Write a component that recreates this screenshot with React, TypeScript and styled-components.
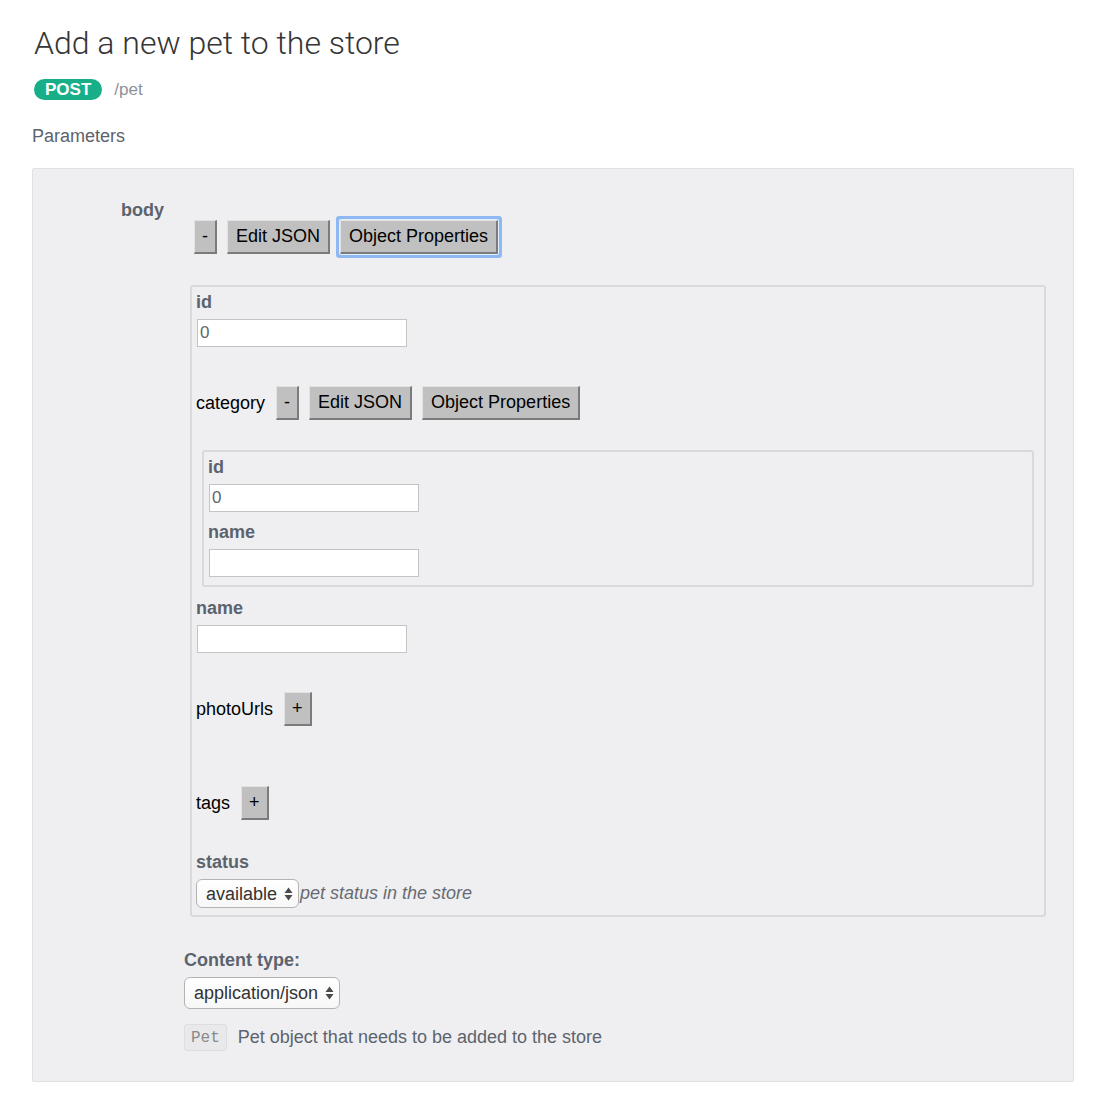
import React from "react";
import styled, { createGlobalStyle, css } from "styled-components";

const GlobalStyle = createGlobalStyle`
  body {
    margin: 0;
    background: #ffffff;
    font-family: "Liberation Sans", Arial, sans-serif;
  }
`;

const Colors = {
  label: "#5c636d",
  muted: "#8d9197",
  panel: "#efeff1",
  panelBorder: "#e1e1e3",
  boxBorder: "#d9d9db",
  post: "#17ae88",
};

const Page = styled.div`
  padding: 24px 32px 36px;
`;

const Title = styled.h2`
  margin: 0 0 0 2px;
  font-family: Roboto, "Liberation Sans", sans-serif;
  font-weight: 300;
  font-size: 32px;
  line-height: 38px;
  color: #363636;
`;

const MethodRow = styled.div`
  display: flex;
  align-items: center;
  gap: 12px;
  margin: 17px 0 0 2px;
`;

const MethodBadge = styled.span`
  display: inline-flex;
  align-items: center;
  height: 21px;
  padding: 0 11px;
  border-radius: 11px;
  background: ${Colors.post};
  color: #fff;
  font-weight: bold;
  font-size: 17px;
`;

const Path = styled.span`
  font-size: 17px;
  color: ${Colors.muted};
`;

const SectionTitle = styled.div`
  margin-top: 25px;
  font-size: 18px;
  line-height: 22px;
  color: ${Colors.label};
`;

const Panel = styled.div`
  margin-top: 21px;
  background: ${Colors.panel};
  border: 1px solid ${Colors.panelBorder};
  border-radius: 2px;
  padding: 30px 27px 30px 88px;
  display: grid;
  grid-template-columns: 63px 1fr;
`;

const ParamName = styled.div`
  font-size: 18px;
  line-height: 22px;
  font-weight: bold;
  color: ${Colors.label};
`;

const ParamBody = styled.div`
  display: flex;
  flex-direction: column;
  align-items: flex-start;
`;

const ButtonRow = styled.div`
  display: flex;
  align-items: center;
  gap: 10px;
  margin-top: 21px;
  padding-left: 10px;
`;

const Button = styled.button<{ $focused?: boolean }>`
  height: 34px;
  padding: 0 8px;
  background: #c0c0c0;
  color: #000;
  font-family: "Liberation Sans", Arial, sans-serif;
  font-size: 18px;
  border-style: solid;
  border-color: #e2e2e2 #7b7b7b #7b7b7b #e2e2e2;
  border-width: 1px 2px 2px 1px;
  border-radius: 0;
  cursor: pointer;
  ${(p) =>
    p.$focused &&
    css`
      box-shadow: 0 0 0 1px #e4eefc, 0 0 0 4px #8db8f2;
      border-radius: 1px;
    `}
`;

const SmallButton = styled(Button)`
  padding: 0 7px;
`;

const ObjectBox = styled.div<{ $top?: number; $nested?: boolean }>`
  align-self: stretch;
  margin-top: ${(p) => p.$top ?? 0}px;
  margin-left: 6px;
  margin-right: ${(p) => (p.$nested ? 6 : 0)}px;
  border: 2px solid ${Colors.boxBorder};
  border-radius: 3px;
  padding: ${(p) => (p.$nested ? "4px 4px 8px" : "4px 4px 7px")};
  display: flex;
  flex-direction: column;
  align-items: flex-start;
`;

const Field = styled.div<{ $top?: number }>`
  display: flex;
  flex-direction: column;
  align-items: flex-start;
  margin-top: ${(p) => p.$top ?? 0}px;
`;

const FieldLabel = styled.label`
  display: block;
  font-size: 18px;
  line-height: 22px;
  font-weight: bold;
  color: ${Colors.label};
  margin-bottom: 6px;
`;

const TextInput = styled.input`
  box-sizing: border-box;
  width: 210px;
  height: 28px;
  margin: 0 0 0 1px;
  padding: 0 2px;
  border: 1px solid #c4c4c4;
  background: #fff;
  font-family: "Liberation Sans", Arial, sans-serif;
  font-size: 17px;
  color: #666;
  outline: none;
`;

const InlineRow = styled.div<{ $top?: number }>`
  display: flex;
  align-items: center;
  gap: 10px;
  margin-top: ${(p) => p.$top ?? 0}px;
`;

const PlainLabel = styled.span`
  font-size: 18px;
  color: #000;
  margin-right: 1px;
`;

const SelectWrap = styled.span`
  position: relative;
  display: inline-flex;
`;

const Select = styled.select<{ $height: number }>`
  appearance: none;
  -webkit-appearance: none;
  height: ${(p) => p.$height}px;
  padding: 0 20px 0 9px;
  border: 1px solid #b3b3b3;
  border-radius: 6px;
  background: linear-gradient(#ffffff, #f7f7f7);
  font-family: "Liberation Sans", Arial, sans-serif;
  font-size: 18px;
  color: #333;
  outline: none;
`;

const Arrows = styled.svg`
  position: absolute;
  right: 6px;
  top: 50%;
  margin-top: -7px;
  pointer-events: none;
`;

const Hint = styled.span`
  font-size: 18px;
  font-style: italic;
  color: #666c74;
  margin-left: 1px;
`;

const StatusRow = styled.div`
  display: flex;
  align-items: center;
`;

const ContentLabel = styled(FieldLabel)`
  margin-top: 32px;
`;

const DescRow = styled.div`
  display: flex;
  align-items: center;
  gap: 11px;
  margin-top: 15px;
`;

const Code = styled.code`
  display: inline-flex;
  align-items: center;
  height: 27px;
  box-sizing: border-box;
  padding: 0 6px;
  border: 1px solid #dedee0;
  border-radius: 3px;
  background: #e9e9eb;
  font-family: "Liberation Mono", monospace;
  font-size: 16px;
  color: #8a8a8a;
`;

const Description = styled.span`
  font-size: 18px;
  color: ${Colors.label};
`;

const SelectBox = ({
  value,
  options,
  height,
}: {
  value: string;
  options: string[];
  height: number;
}) => (
  <SelectWrap>
    <Select $height={height} defaultValue={value}>
      {options.map((o) => (
        <option key={o}>{o}</option>
      ))}
    </Select>
    <Arrows width="9" height="14" viewBox="0 0 9 14">
      <path d="M4.5 0.5 L8.5 6 L0.5 6 Z" fill="#4a4a4a" />
      <path d="M4.5 13.5 L8.5 8 L0.5 8 Z" fill="#4a4a4a" />
    </Arrows>
  </SelectWrap>
);

const App = () => {
  return (
    <>
      <GlobalStyle />
      <Page>
        <Title>Add a new pet to the store</Title>
        <MethodRow>
          <MethodBadge>POST</MethodBadge>
          <Path>/pet</Path>
        </MethodRow>
        <SectionTitle>Parameters</SectionTitle>

        <Panel>
          <ParamName>body</ParamName>
          <ParamBody>
            <ButtonRow>
              <SmallButton>-</SmallButton>
              <Button>Edit JSON</Button>
              <Button $focused>Object Properties</Button>
            </ButtonRow>

            <ObjectBox $top={31}>
              <Field>
                <FieldLabel>id</FieldLabel>
                <TextInput defaultValue="0" />
              </Field>

              <InlineRow $top={39}>
                <PlainLabel>category</PlainLabel>
                <SmallButton>-</SmallButton>
                <Button>Edit JSON</Button>
                <Button>Object Properties</Button>
              </InlineRow>

              <ObjectBox $top={30} $nested>
                <Field>
                  <FieldLabel>id</FieldLabel>
                  <TextInput defaultValue="0" />
                </Field>
                <Field $top={9}>
                  <FieldLabel>name</FieldLabel>
                  <TextInput />
                </Field>
              </ObjectBox>

              <Field $top={10}>
                <FieldLabel>name</FieldLabel>
                <TextInput />
              </Field>

              <InlineRow $top={39}>
                <PlainLabel>photoUrls</PlainLabel>
                <SmallButton>+</SmallButton>
              </InlineRow>

              <InlineRow $top={60}>
                <PlainLabel>tags</PlainLabel>
                <SmallButton>+</SmallButton>
              </InlineRow>

              <Field $top={31}>
                <FieldLabel>status</FieldLabel>
                <StatusRow>
                  <SelectBox
                    value="available"
                    options={["available", "pending", "sold"]}
                    height={29}
                  />
                  <Hint>pet status in the store</Hint>
                </StatusRow>
              </Field>
            </ObjectBox>

            <ContentLabel>Content type:</ContentLabel>
            <SelectBox
              value="application/json"
              options={["application/json", "application/xml"]}
              height={32}
            />
            <DescRow>
              <Code>Pet</Code>
              <Description>Pet object that needs to be added to the store</Description>
            </DescRow>
          </ParamBody>
        </Panel>
      </Page>
    </>
  );
};

export default App;
